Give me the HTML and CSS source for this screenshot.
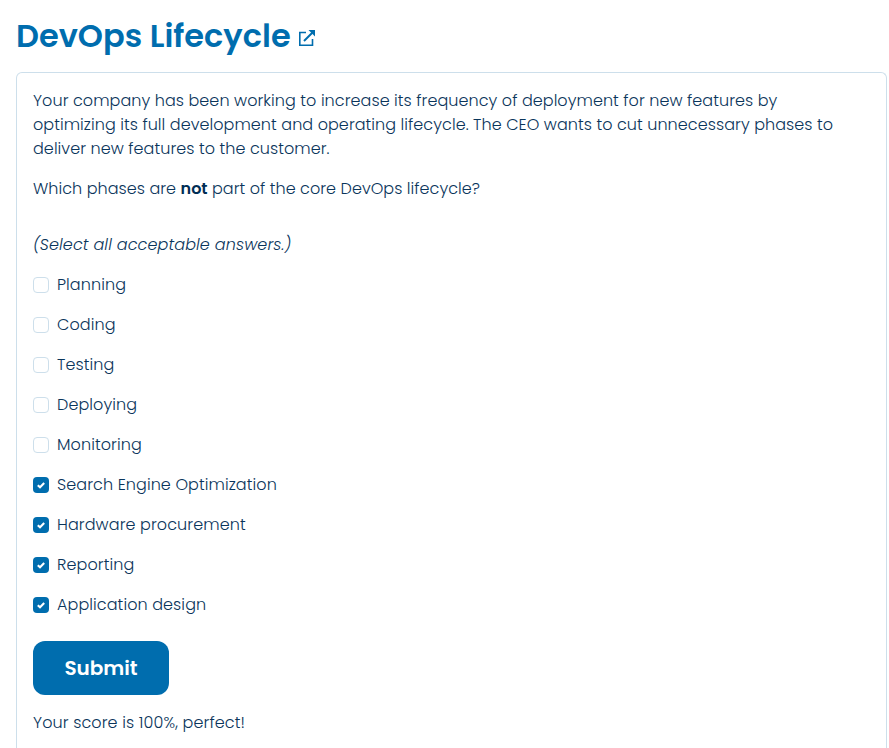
FILE: index.html
```html
<!DOCTYPE html>
<html lang="en">
<head>
<meta charset="utf-8">
<title>DevOps Lifecycle</title>
<link rel="stylesheet" href="styles.css">
</head>
<body>
<header class="heading">
  <h1 class="title">DevOps Lifecycle</h1>
  <svg class="external" viewBox="0 0 18 18" aria-hidden="true"><path d="M8 3.5H1.8V16.2H14.5V10"/><path class="arrow" d="M6 12L14.5 3.5"/><path class="head" d="M10.5 1H17V7.5Z"/></svg>
</header>
<main class="card">
  <p class="intro">Your company has been working to increase its frequency of deployment for new features by<br>optimizing its full development and operating lifecycle. The CEO wants to cut unnecessary phases to<br>deliver new features to the customer.</p>
  <p class="question">Which phases are <b>not</b> part of the core DevOps lifecycle?</p>
  <p class="hint">(Select all acceptable answers.)</p>
  <div class="options">
    <label class="option"><span class="box"></span>Planning</label>
    <label class="option"><span class="box"></span>Coding</label>
    <label class="option"><span class="box"></span>Testing</label>
    <label class="option"><span class="box"></span>Deploying</label>
    <label class="option"><span class="box"></span>Monitoring</label>
    <label class="option"><span class="box checked"><svg viewBox="0 0 16 16"><path d="M4.8 8.2L7 10.2L11.2 5.9"/></svg></span>Search Engine Optimization</label>
    <label class="option"><span class="box checked"><svg viewBox="0 0 16 16"><path d="M4.8 8.2L7 10.2L11.2 5.9"/></svg></span>Hardware procurement</label>
    <label class="option"><span class="box checked"><svg viewBox="0 0 16 16"><path d="M4.8 8.2L7 10.2L11.2 5.9"/></svg></span>Reporting</label>
    <label class="option"><span class="box checked"><svg viewBox="0 0 16 16"><path d="M4.8 8.2L7 10.2L11.2 5.9"/></svg></span>Application design</label>
  </div>
  <button class="submit" type="button">Submit</button>
  <p class="score">Your score is 100%, perfect!</p>
</main>
</body>
</html>
```
FILE: styles.css
```css
* { box-sizing: border-box; }
body {
  height: 748px;
  overflow: hidden;
  margin: 0;
  padding: 16px 2px 0 16px;
  background: #fff;
  color: #0a355b;
  font: 300 16px/24px Poppins, Inter, sans-serif;
  letter-spacing: .067px;
}
p { margin: 0; white-space: nowrap; }
.heading {
  display: flex;
  align-items: center;
  height: 40px;
  margin-bottom: 16px;
  color: #006dae;
}
.title {
  width: 282px;
  margin: 0;
  font-size: 32px;
  line-height: 40px;
  font-weight: 600;
  letter-spacing: 0;
  white-space: nowrap;
}
.external {
  width: 18px;
  height: 18px;
  margin-top: 4px;
  fill: none;
  stroke: currentColor;
  stroke-width: 1.6;
}
.external .arrow { stroke-width: 2; }
.external .head { fill: currentColor; stroke: none; }
.card {
  height: 676px;
  padding: 16px;
  border: 1px solid #cddfeb;
  border-bottom: 0;
  border-radius: 6px 6px 0 0;
}
.question { margin-top: 16px; letter-spacing: .05px; }
.hint { margin: 32px 0 16px; font-style: italic; letter-spacing: .11px; }
b { color: #002d54; font-weight: 600; letter-spacing: 0; }
.options { display: flex; flex-direction: column; gap: 16px; letter-spacing: .09px; }
.option { display: flex; align-items: center; gap: 8px; height: 24px; }
.box {
  width: 16px;
  height: 16px;
  border: 1px solid #cddfeb;
  border-radius: 4px;
}
.box.checked { border: 0; background: #006dae; }
.box svg { display: block; fill: none; stroke: #fff; stroke-width: 2.1; }
.submit {
  display: block;
  width: 136px;
  height: 54px;
  margin: 24px 0 16px;
  padding: 0;
  border: 0;
  border-radius: 12px;
  background: #006dae;
  color: #fff;
  font: 600 20px/30px Poppins, Inter, sans-serif;
  letter-spacing: 0;
}
.score { letter-spacing: .11px; }
```
